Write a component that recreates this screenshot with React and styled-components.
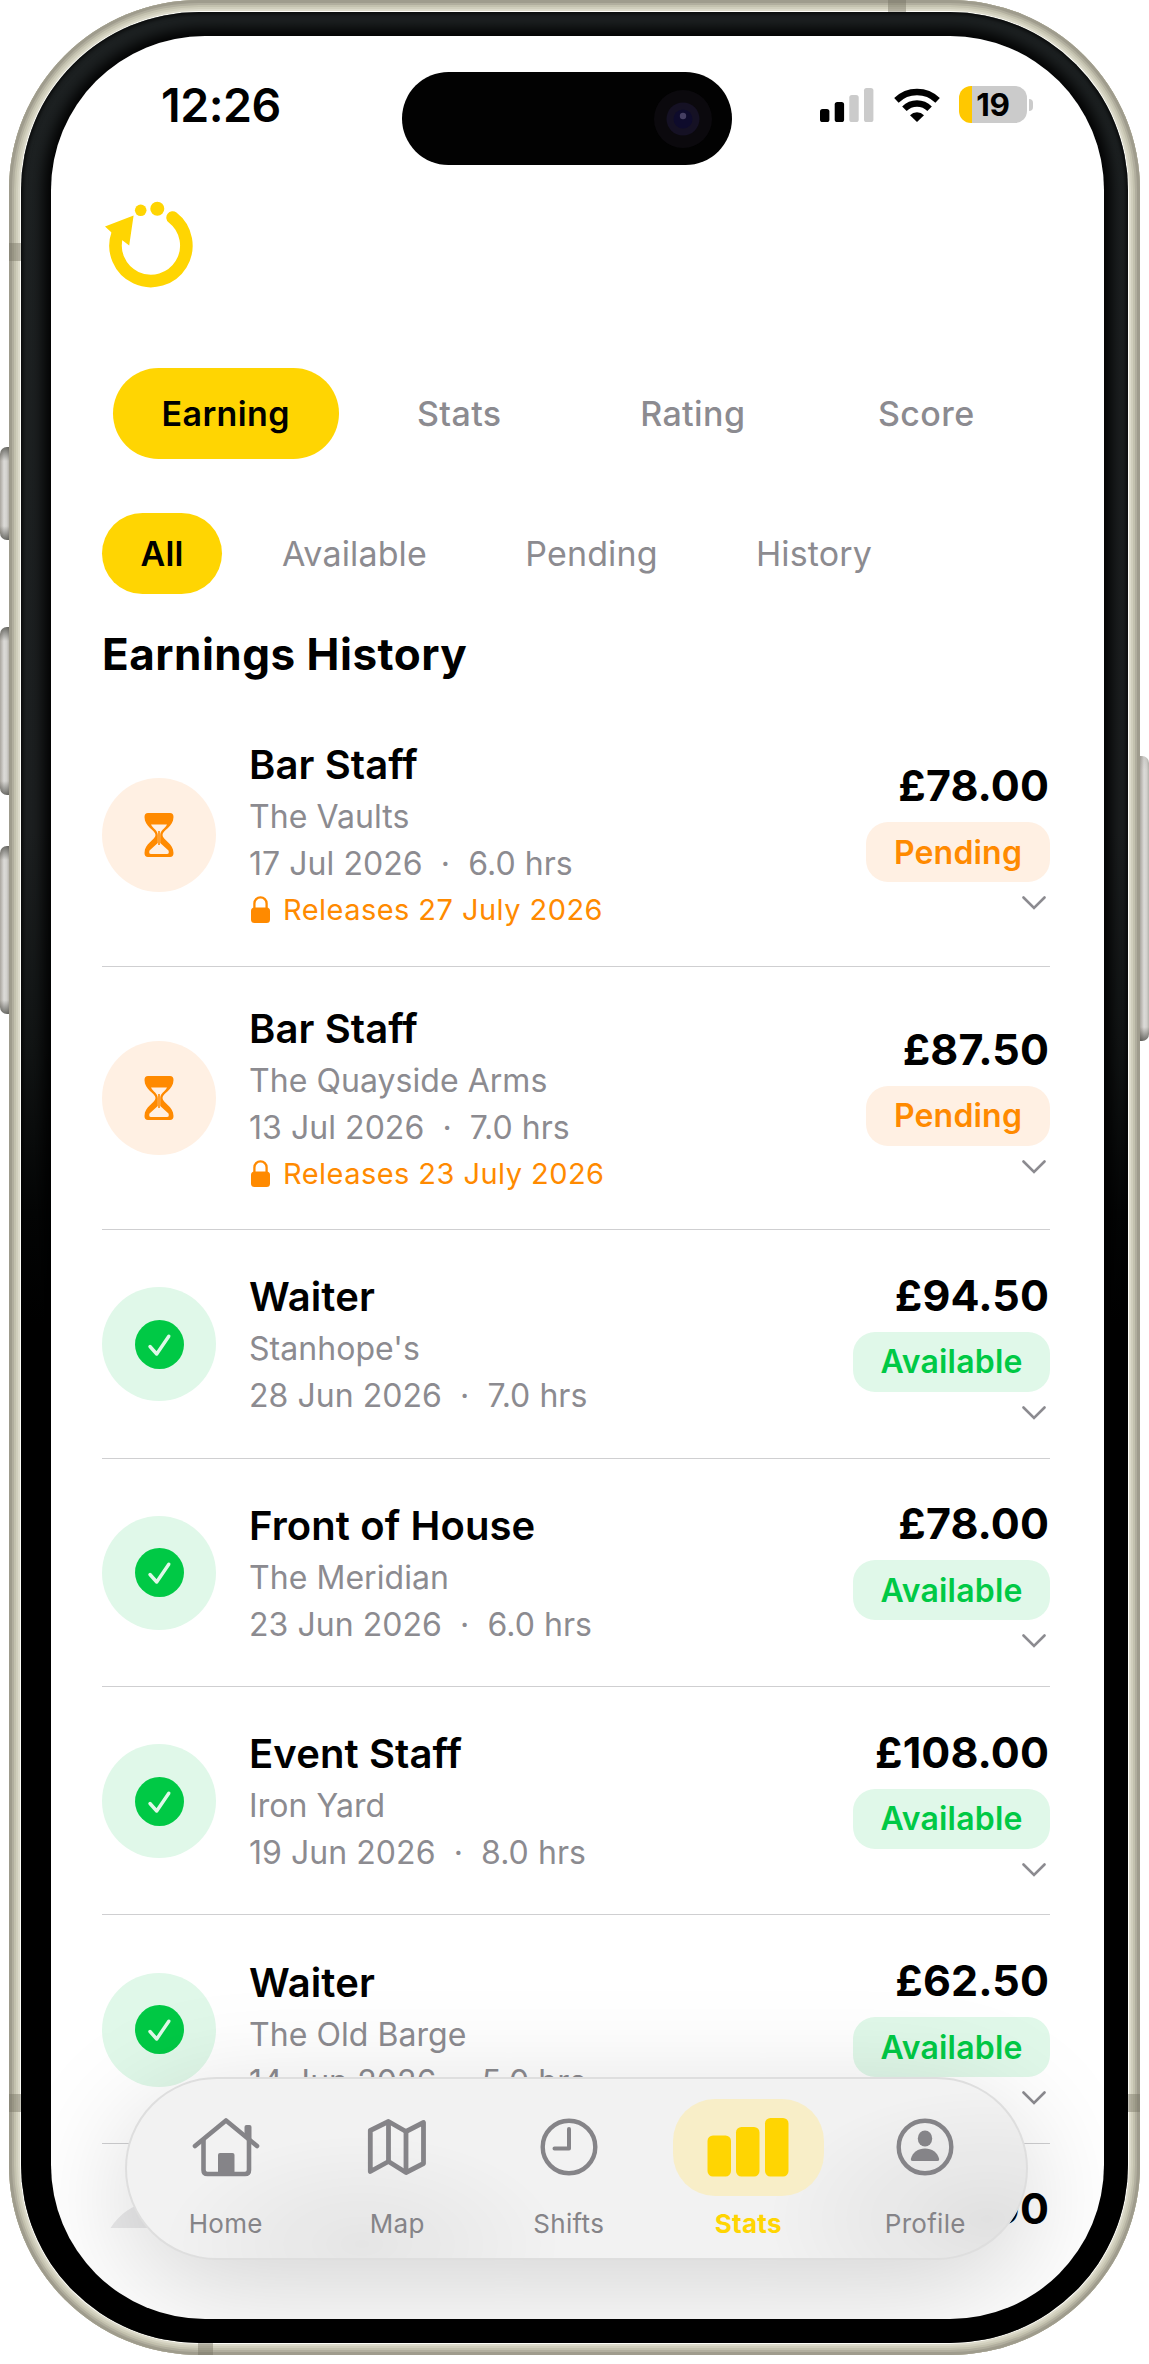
import React from "react";
import styled, { createGlobalStyle } from "styled-components";

const GlobalStyle = createGlobalStyle`
  * {
    box-sizing: border-box;
  }

  body {
    margin: 0;
    background: #fff;
    font-family: Inter, "Liberation Sans", sans-serif;
    color: #000;
  }
`;

/* ---------- device ---------- */

const Device = styled.div`
  display: flex;
  width: 1149px;
  height: 2364px;
  overflow: hidden;
`;

const SideRail = styled.div`
  display: flex;
  flex-direction: column;
  width: 9px;
  padding-top: ${(props) => props.$top}px;
`;

const SideKey = styled.div`
  height: ${(props) => props.$height}px;
  margin-bottom: ${(props) => props.$gap || 0}px;
  border-radius: ${(props) => (props.$right ? "0 7px 7px 0" : "7px 0 0 7px")};
  background: linear-gradient(
      180deg,
      rgba(70, 70, 65, ${(props) => (props.$right ? 0.1 : 0.75)}) 0,
      rgba(70, 70, 65, 0) 14px,
      rgba(70, 70, 65, 0) calc(100% - 14px),
      rgba(70, 70, 65, 0.75) 100%
    ),
    linear-gradient(90deg, #aaa69f, #dcdbd8 45%, #d2d1cd 75%, #b5b2ac);
`;

const Frame = styled.div`
  position: relative;
  width: 1131px;
  height: 2355px;
  padding: 12px;
  border-radius: 190px;
  background: #fdfdf8;
  box-shadow: inset 0 0 0 3px #9f9c8d, inset 0 0 0 5px #b1ae9e,
    inset 0 0 0 7px #c3c1ae, inset 0 0 0 9px #d0cebc, inset 0 0 0 11px #dcdaca;
`;

const Band = styled.span`
  position: absolute;
  left: ${(props) => props.$x}px;
  top: ${(props) => props.$y}px;
  width: ${(props) => props.$w}px;
  height: ${(props) => props.$h}px;
  background: rgba(115, 111, 95, 0.42);
`;

const Bezel = styled.div`
  width: 1107px;
  height: 2331px;
  padding: 24px 24px 24px 30px;
  border-radius: 178px;
  overflow: hidden;
  background: linear-gradient(
    180deg,
    #1d2122 0,
    #1c1f20 820px,
    #111414 1040px,
    #040505 1200px,
    #000 1340px
  );
  box-shadow: inset 0 0 5px 1px #000;
`;

const Screen = styled.div`
  position: relative;
  display: flex;
  flex-direction: column;
  width: 1053px;
  height: 2283px;
  border-radius: 154px;
  overflow: hidden;
  background: #fff;
`;

const ScreenGlow = styled.div`
  border-radius: 154px;
  box-shadow: 0 0 14px 7px #000;
`;

/* ---------- status bar ---------- */

const StatusBar = styled.div`
  display: flex;
  align-items: center;
  height: 165px;
  padding: 36px 0 36px 110px;
`;

const Time = styled.div`
  width: 241px;
  font-size: 46.5px;
  font-weight: 600;
  letter-spacing: -0.5px;
  line-height: 60px;
  margin-top: -28px;
`;

const Island = styled.div`
  display: flex;
  align-items: center;
  justify-content: flex-end;
  width: 330px;
  height: 93px;
  padding-right: 20px;
  border-radius: 47px;
  background: #020202;
`;

const Camera = styled.svg`
  display: block;
  width: 58px;
  height: 58px;
`;

const StatusIcons = styled.div`
  display: flex;
  align-items: center;
  gap: 19.5px;
  margin-left: 88px;
  margin-top: -28px;
`;

const Battery = styled.div`
  display: flex;
  align-items: center;
  justify-content: center;
  width: 68px;
  height: 37px;
  border-radius: 12px;
  background: linear-gradient(90deg, #ffc800 13px, #cbcbcb 13px);
  font-size: 31.5px;
  font-weight: 700;
  letter-spacing: -0.3px;
`;

const BatteryWrap = styled.div`
  display: flex;
  align-items: center;
  gap: 2px;
`;

const BatteryTip = styled.div`
  width: 4px;
  height: 12px;
  border-radius: 0 6px 6px 0;
  background: #cbcbcb;
`;

/* ---------- header and tabs ---------- */

const LogoRow = styled.div`
  height: 167px;
  margin-top: -2px;
  margin-bottom: 2px;
  padding: 0 0 0 50px;
`;

const Tabs = styled.div`
  display: grid;
  grid-template-columns: repeat(4, 225.5px);
  gap: 8px;
  padding-left: 62px;
`;

const Tab = styled.div`
  display: flex;
  align-items: center;
  justify-content: center;
  height: 91px;
  border-radius: 46px;
  background: ${(props) => (props.$active ? "#ffd502" : "transparent")};
  color: ${(props) => (props.$active ? "#000" : "#8c8b90")};
  font-size: 34px;
  font-weight: ${(props) => (props.$active ? 600 : 500)};
  letter-spacing: 0.4px;
`;

const Filters = styled.div`
  display: flex;
  gap: 22px;
  margin-top: 54px;
  padding-left: 51px;
`;

const Filter = styled.div`
  display: flex;
  align-items: center;
  justify-content: center;
  width: ${(props) => props.$width}px;
  height: 81px;
  border-radius: 41px;
  background: ${(props) => (props.$active ? "#ffd502" : "transparent")};
  color: ${(props) => (props.$active ? "#000" : "#8c8b90")};
  font-size: 34px;
  font-weight: ${(props) => (props.$active ? 600 : 400)};
  letter-spacing: 0.15px;
`;

const Title = styled.h1`
  margin: 30px 0 0;
  padding-left: 51px;
  font-size: 44px;
  font-weight: 700;
  line-height: 60px;
  letter-spacing: 0.5px;
`;

/* ---------- earnings list ---------- */

const List = styled.div`
  height: 1525px;
  margin-top: 19px;
  padding: 0 54px 0 51px;
  overflow: hidden;
`;

const Row = styled.div`
  display: flex;
  align-items: center;
  height: ${(props) => (props.$tall ? 263.6 : 228.4)}px;
  padding-top: 1px;
  border-bottom: 1px solid #cfcfd1;
`;

const Badge = styled.div`
  display: flex;
  align-items: center;
  justify-content: center;
  width: 114px;
  height: 114px;
  border-radius: 50%;
  background: ${(props) => props.$bg};
`;

const Details = styled.div`
  display: flex;
  flex-direction: column;
  flex: 1;
  margin-left: 33px;
`;

const Role = styled.div`
  font-size: 40px;
  font-weight: 600;
  line-height: 56px;
  letter-spacing: 0.1px;
`;

const Meta = styled.div`
  color: #8c8b90;
  font-size: 32px;
  line-height: 47px;
  letter-spacing: 0.05px;
  white-space: pre;
`;

const Release = styled.div`
  display: flex;
  align-items: center;
  gap: 13px;
  padding-left: 2px;
  color: #ff8a00;
  font-size: 29px;
  line-height: 45px;
  letter-spacing: 0.45px;
`;

const Summary = styled.div`
  display: flex;
  flex-direction: column;
  align-items: flex-end;
`;

const Amount = styled.div`
  padding-right: 1px;
  font-size: 43px;
  font-weight: 700;
  line-height: 52px;
  letter-spacing: 0.1px;
`;

const Status = styled.div`
  display: flex;
  align-items: center;
  justify-content: center;
  width: ${(props) => (props.$pending ? 184 : 197)}px;
  height: 60px;
  margin: 11px 0 14px;
  border-radius: 22px;
  background: ${(props) => (props.$pending ? "#fff0e3" : "#e0f8e9")};
  color: ${(props) => (props.$pending ? "#ff8a00" : "#00c945")};
  font-size: 32px;
  font-weight: 600;
  letter-spacing: 0.2px;
`;

const Chevron = styled.svg`
  display: block;
  width: 24px;
  height: 14px;
  margin-right: 4px;
`;

/* ---------- bottom navigation ---------- */

const NavBar = styled.nav`
  position: absolute;
  left: 73.5px;
  top: 2041px;
  display: grid;
  grid-template-columns: 171.5px 171.5px 171.5px 187.5px 166.5px;
  width: 903.5px;
  height: 183px;
  padding: 19.5px 0 0 13.5px;
  border: 2px solid #dedede;
  border-radius: 92px;
  background: radial-gradient(
      ellipse 200px 110px at 235px 165px,
      rgba(0, 0, 0, 0.055),
      transparent
    ),
    radial-gradient(
      ellipse 220px 130px at 860px 140px,
      rgba(0, 0, 0, 0.07),
      transparent
    ),
    #f2f2f2;
  box-shadow: 0 30px 120px rgba(0, 0, 0, 0.175);
`;

const NavItem = styled.div`
  display: flex;
  flex-direction: column;
  align-items: center;
  color: ${(props) => (props.$active ? "#ffd502" : "#858488")};
`;

const NavIcon = styled.div`
  display: flex;
  align-items: center;
  justify-content: center;
  width: 151px;
  height: 97px;
  border-radius: 42px;
  background: ${(props) => (props.$active ? "#f8eec8" : "transparent")};
`;

const NavLabel = styled.div`
  margin-top: 11px;
  font-size: 26px;
  font-weight: ${(props) => (props.$active ? 700 : 400)};
  line-height: 34px;
  letter-spacing: 0.3px;
`;

/* ---------- drawings ---------- */

const Logo = () => (
  <svg width="96" height="90" viewBox="101 198 96 90" fill="#ffd502">
    <path
      d="M172.6 216.6A35.4 35.4 0 1 1 117.5 233"
      fill="none"
      stroke="#ffd502"
      strokeWidth="12.6"
      strokeLinecap="round"
    />
    <path d="M105 225.6L133.6 214.4L129.2 244.6L122 239L111.8 231.8Z" />
    <circle cx="140.7" cy="209.3" r="5.8" />
    <circle cx="157.3" cy="207.8" r="7" />
  </svg>
);

const Signal = () => (
  <svg width="54" height="34" viewBox="0 0 54 34">
    <rect x="0" y="21" width="9.4" height="13" rx="2.6" />
    <rect x="14.7" y="14" width="9.4" height="20" rx="2.6" />
    <rect x="29.3" y="7" width="9.4" height="27" rx="2.6" fill="#cbcbcb" />
    <rect x="44" y="0" width="9.4" height="34" rx="2.6" fill="#cbcbcb" />
  </svg>
);

const Wifi = () => (
  <svg width="46" height="34" viewBox="0 0 46 34">
    <g fill="none" stroke="#000" strokeWidth="6.4">
      <path d="M2.4 12.4A29.5 29.5 0 0 1 43.6 12.4" />
      <path d="M10.4 20.7A18 18 0 0 1 35.6 20.7" />
    </g>
    <path d="M16 27.2A10 10 0 0 1 30 27.2L23 34Z" />
  </svg>
);

const Hourglass = () => (
  <svg width="30" height="44" viewBox="0 0 30 44">
    <path
      d="M4 0H26Q29.5 0 29.5 4C29.5 14 18.5 17 18.5 22S29.5 30 29.5 40Q29.5 44 26 44H4Q.5 44 .5 40C.5 30 11.5 27 11.5 22S.5 14 .5 4Q.5 0 4 0Z"
      fill="#ff8a00"
    />
    <path
      d="M7 11.5H23C21 15.5 16.2 17.5 16.2 22V30L24.5 37.5Q25.5 41 23 41H7Q4.5 41 5.5 37.5L13.8 30V22C13.8 17.5 9 15.5 7 11.5Z"
      fill="#fff0e3"
    />
    <path d="M15 18V32" stroke="#ff8a00" strokeWidth="1.6" />
  </svg>
);

const Check = () => (
  <svg width="49" height="49" viewBox="0 0 49 49">
    <circle cx="24.5" cy="24.5" r="24.5" fill="#00c945" />
    <path
      d="M15 26.5L21.7 34L33.8 16.2"
      fill="none"
      stroke="#e0f8e9"
      strokeWidth="3.4"
      strokeLinecap="round"
      strokeLinejoin="round"
    />
  </svg>
);

const Lock = () => (
  <svg width="19" height="27" viewBox="0 0 19 27">
    <rect x="0" y="11.5" width="19" height="15.5" rx="3.5" fill="#ff8a00" />
    <path
      d="M3.4 13V7.5A6.1 6.1 0 0 1 15.6 7.5V13"
      fill="none"
      stroke="#ff8a00"
      strokeWidth="2.3"
    />
  </svg>
);

const HomeIcon = () => (
  <svg width="68" height="60" viewBox="0 0 68 60">
    <g
      fill="none"
      stroke="currentColor"
      strokeWidth="4.6"
      strokeLinecap="round"
      strokeLinejoin="round"
    >
      <path d="M3 29L34 3.5L65 29" />
      <path d="M11.5 23V53Q11.5 57 15.5 57H53Q57 57 57 53V23" />
    </g>
    <path
      d="M26 57V38Q26 36 28 36H40.5Q42.5 36 42.5 38V57Z"
      fill="currentColor"
    />
    <path
      d="M52.5 18V10Q52.5 8 54.5 8H57.5Q59.5 8 59.5 10V24Z"
      fill="currentColor"
    />
  </svg>
);

const MapIcon = () => (
  <svg width="60" height="58" viewBox="0 0 60 58">
    <g
      fill="none"
      stroke="currentColor"
      strokeWidth="4.8"
      strokeLinejoin="round"
    >
      <path d="M3.3 12.5L21.5 3.5L39 13.5L56.5 4.5V45.5L39 54.5L21.5 43.5L3.3 53.5Z" />
      <path d="M21.5 3.5V43.5M39 13.5V54.5" />
    </g>
  </svg>
);

const ClockIcon = () => (
  <svg width="58" height="58" viewBox="0 0 58 58">
    <g fill="none" stroke="currentColor" strokeLinecap="round">
      <circle cx="29" cy="29" r="26.3" strokeWidth="4.4" />
      <path d="M29 11V30.5H14.5" strokeWidth="4" strokeLinejoin="round" />
    </g>
  </svg>
);

const StatsIcon = () => (
  <svg width="82" height="60" viewBox="0 0 82 60" fill="currentColor">
    <rect x="0.5" y="18.5" width="23.5" height="41" rx="5.5" />
    <rect x="29" y="10" width="23.5" height="49.5" rx="5.5" />
    <rect x="58" y="1" width="23.5" height="58.5" rx="5.5" />
  </svg>
);

const ProfileIcon = () => (
  <svg width="58" height="58" viewBox="0 0 58 58">
    <circle
      cx="29"
      cy="29"
      r="26.3"
      fill="none"
      stroke="currentColor"
      strokeWidth="4.4"
    />
    <ellipse cx="29" cy="20.5" rx="7.2" ry="8" fill="currentColor" />
    <path
      d="M16.5 43Q14.5 43 14.8 41C16.5 34.5 22 30.5 29 30.5S41.5 34.5 43.2 41Q43.5 43 41.5 43Z"
      fill="currentColor"
    />
  </svg>
);

/* ---------- data ---------- */

const filters = [
  { label: "All", width: 120 },
  { label: "Available", width: 221 },
  { label: "Pending", width: 209 },
  { label: "History", width: 192 },
];

const earnings = [
  {
    role: "Bar Staff",
    venue: "The Vaults",
    date: "17 Jul 2026",
    hours: "6.0 hrs",
    amount: "£78.00",
    release: "Releases 27 July 2026",
  },
  {
    role: "Bar Staff",
    venue: "The Quayside Arms",
    date: "13 Jul 2026",
    hours: "7.0 hrs",
    amount: "£87.50",
    release: "Releases 23 July 2026",
  },
  {
    role: "Waiter",
    venue: "Stanhope's",
    date: "28 Jun 2026",
    hours: "7.0 hrs",
    amount: "£94.50",
  },
  {
    role: "Front of House",
    venue: "The Meridian",
    date: "23 Jun 2026",
    hours: "6.0 hrs",
    amount: "£78.00",
  },
  {
    role: "Event Staff",
    venue: "Iron Yard",
    date: "19 Jun 2026",
    hours: "8.0 hrs",
    amount: "£108.00",
  },
  {
    role: "Waiter",
    venue: "The Old Barge",
    date: "14 Jun 2026",
    hours: "5.0 hrs",
    amount: "£62.50",
  },
];

const navItems = [
  { label: "Home", icon: <HomeIcon /> },
  { label: "Map", icon: <MapIcon /> },
  { label: "Shifts", icon: <ClockIcon /> },
  { label: "Stats", icon: <StatsIcon />, active: true },
  { label: "Profile", icon: <ProfileIcon /> },
];

const EarningRow = ({ earning }) => {
  const pending = Boolean(earning.release);

  return (
    <Row $tall={pending}>
      <Badge $bg={pending ? "#fff0e3" : "#e0f8e9"}>
        {pending ? <Hourglass /> : <Check />}
      </Badge>
      <Details>
        <Role>{earning.role}</Role>
        <Meta>{earning.venue}</Meta>
        <Meta>{`${earning.date}  ·  ${earning.hours}`}</Meta>
        {pending && (
          <Release>
            <Lock />
            {earning.release}
          </Release>
        )}
      </Details>
      <Summary>
        <Amount>{earning.amount}</Amount>
        <Status $pending={pending}>{pending ? "Pending" : "Available"}</Status>
        <Chevron viewBox="0 0 24 14">
          <path
            d="M1.5 1.5L12 12L22.5 1.5"
            fill="none"
            stroke="#8c8b90"
            strokeWidth="2.6"
            strokeLinecap="round"
          />
        </Chevron>
      </Summary>
    </Row>
  );
};

const App = () => {
  return (
    <>
      <GlobalStyle />
      <Device>
        <SideRail $top={447}>
          <SideKey $height={93} $gap={87} />
          <SideKey $height={168} $gap={51} />
          <SideKey $height={168} />
        </SideRail>
        <Frame>
          <Band $x={879} $y={0} $w={18} $h={12} />
          <Band $x={0} $y={243} $w={12} $h={18} />
          <Band $x={0} $y={2094} $w={12} $h={18} />
          <Band $x={1119} $y={2094} $w={12} $h={18} />
          <Band $x={189} $y={2343} $w={15} $h={12} />
          <Bezel>
            <ScreenGlow>
              <Screen>
                <StatusBar>
                  <Time>12:26</Time>
                  <Island>
                    <Camera viewBox="0 0 58 58">
                      <circle cx="29" cy="29" r="29" fill="#0b090d" />
                      <circle cx="29" cy="29" r="16.5" fill="#151124" />
                      <circle cx="29" cy="29" r="9.5" fill="#0e0b2c" />
                      <circle cx="29" cy="26" r="3.2" fill="#453f63" />
                    </Camera>
                  </Island>
                  <StatusIcons>
                    <Signal />
                    <Wifi />
                    <BatteryWrap>
                      <Battery>19</Battery>
                      <BatteryTip />
                    </BatteryWrap>
                  </StatusIcons>
                </StatusBar>
                <LogoRow>
                  <Logo />
                </LogoRow>
                <Tabs>
                  <Tab $active>Earning</Tab>
                  <Tab>Stats</Tab>
                  <Tab>Rating</Tab>
                  <Tab>Score</Tab>
                </Tabs>
                <Filters>
                  {filters.map((filter, i) => (
                    <Filter
                      key={filter.label}
                      $width={filter.width}
                      $active={i === 0}
                    >
                      {filter.label}
                    </Filter>
                  ))}
                </Filters>
                <Title>Earnings History</Title>
                <List>
                  {earnings.map((earning) => (
                    <EarningRow key={earning.date} earning={earning} />
                  ))}
                  <Row>
                    <Badge $bg="#ebebec" />
                    <Details />
                    <Summary>
                      <Amount>00</Amount>
                      <Status />
                      <Chevron />
                    </Summary>
                  </Row>
                </List>
                <NavBar>
                  {navItems.map((item) => (
                    <NavItem key={item.label} $active={item.active}>
                      <NavIcon $active={item.active}>{item.icon}</NavIcon>
                      <NavLabel $active={item.active}>{item.label}</NavLabel>
                    </NavItem>
                  ))}
                </NavBar>
              </Screen>
            </ScreenGlow>
          </Bezel>
        </Frame>
        <SideRail $top={756}>
          <SideKey $right $height={285} />
        </SideRail>
      </Device>
    </>
  );
};

export default App;
